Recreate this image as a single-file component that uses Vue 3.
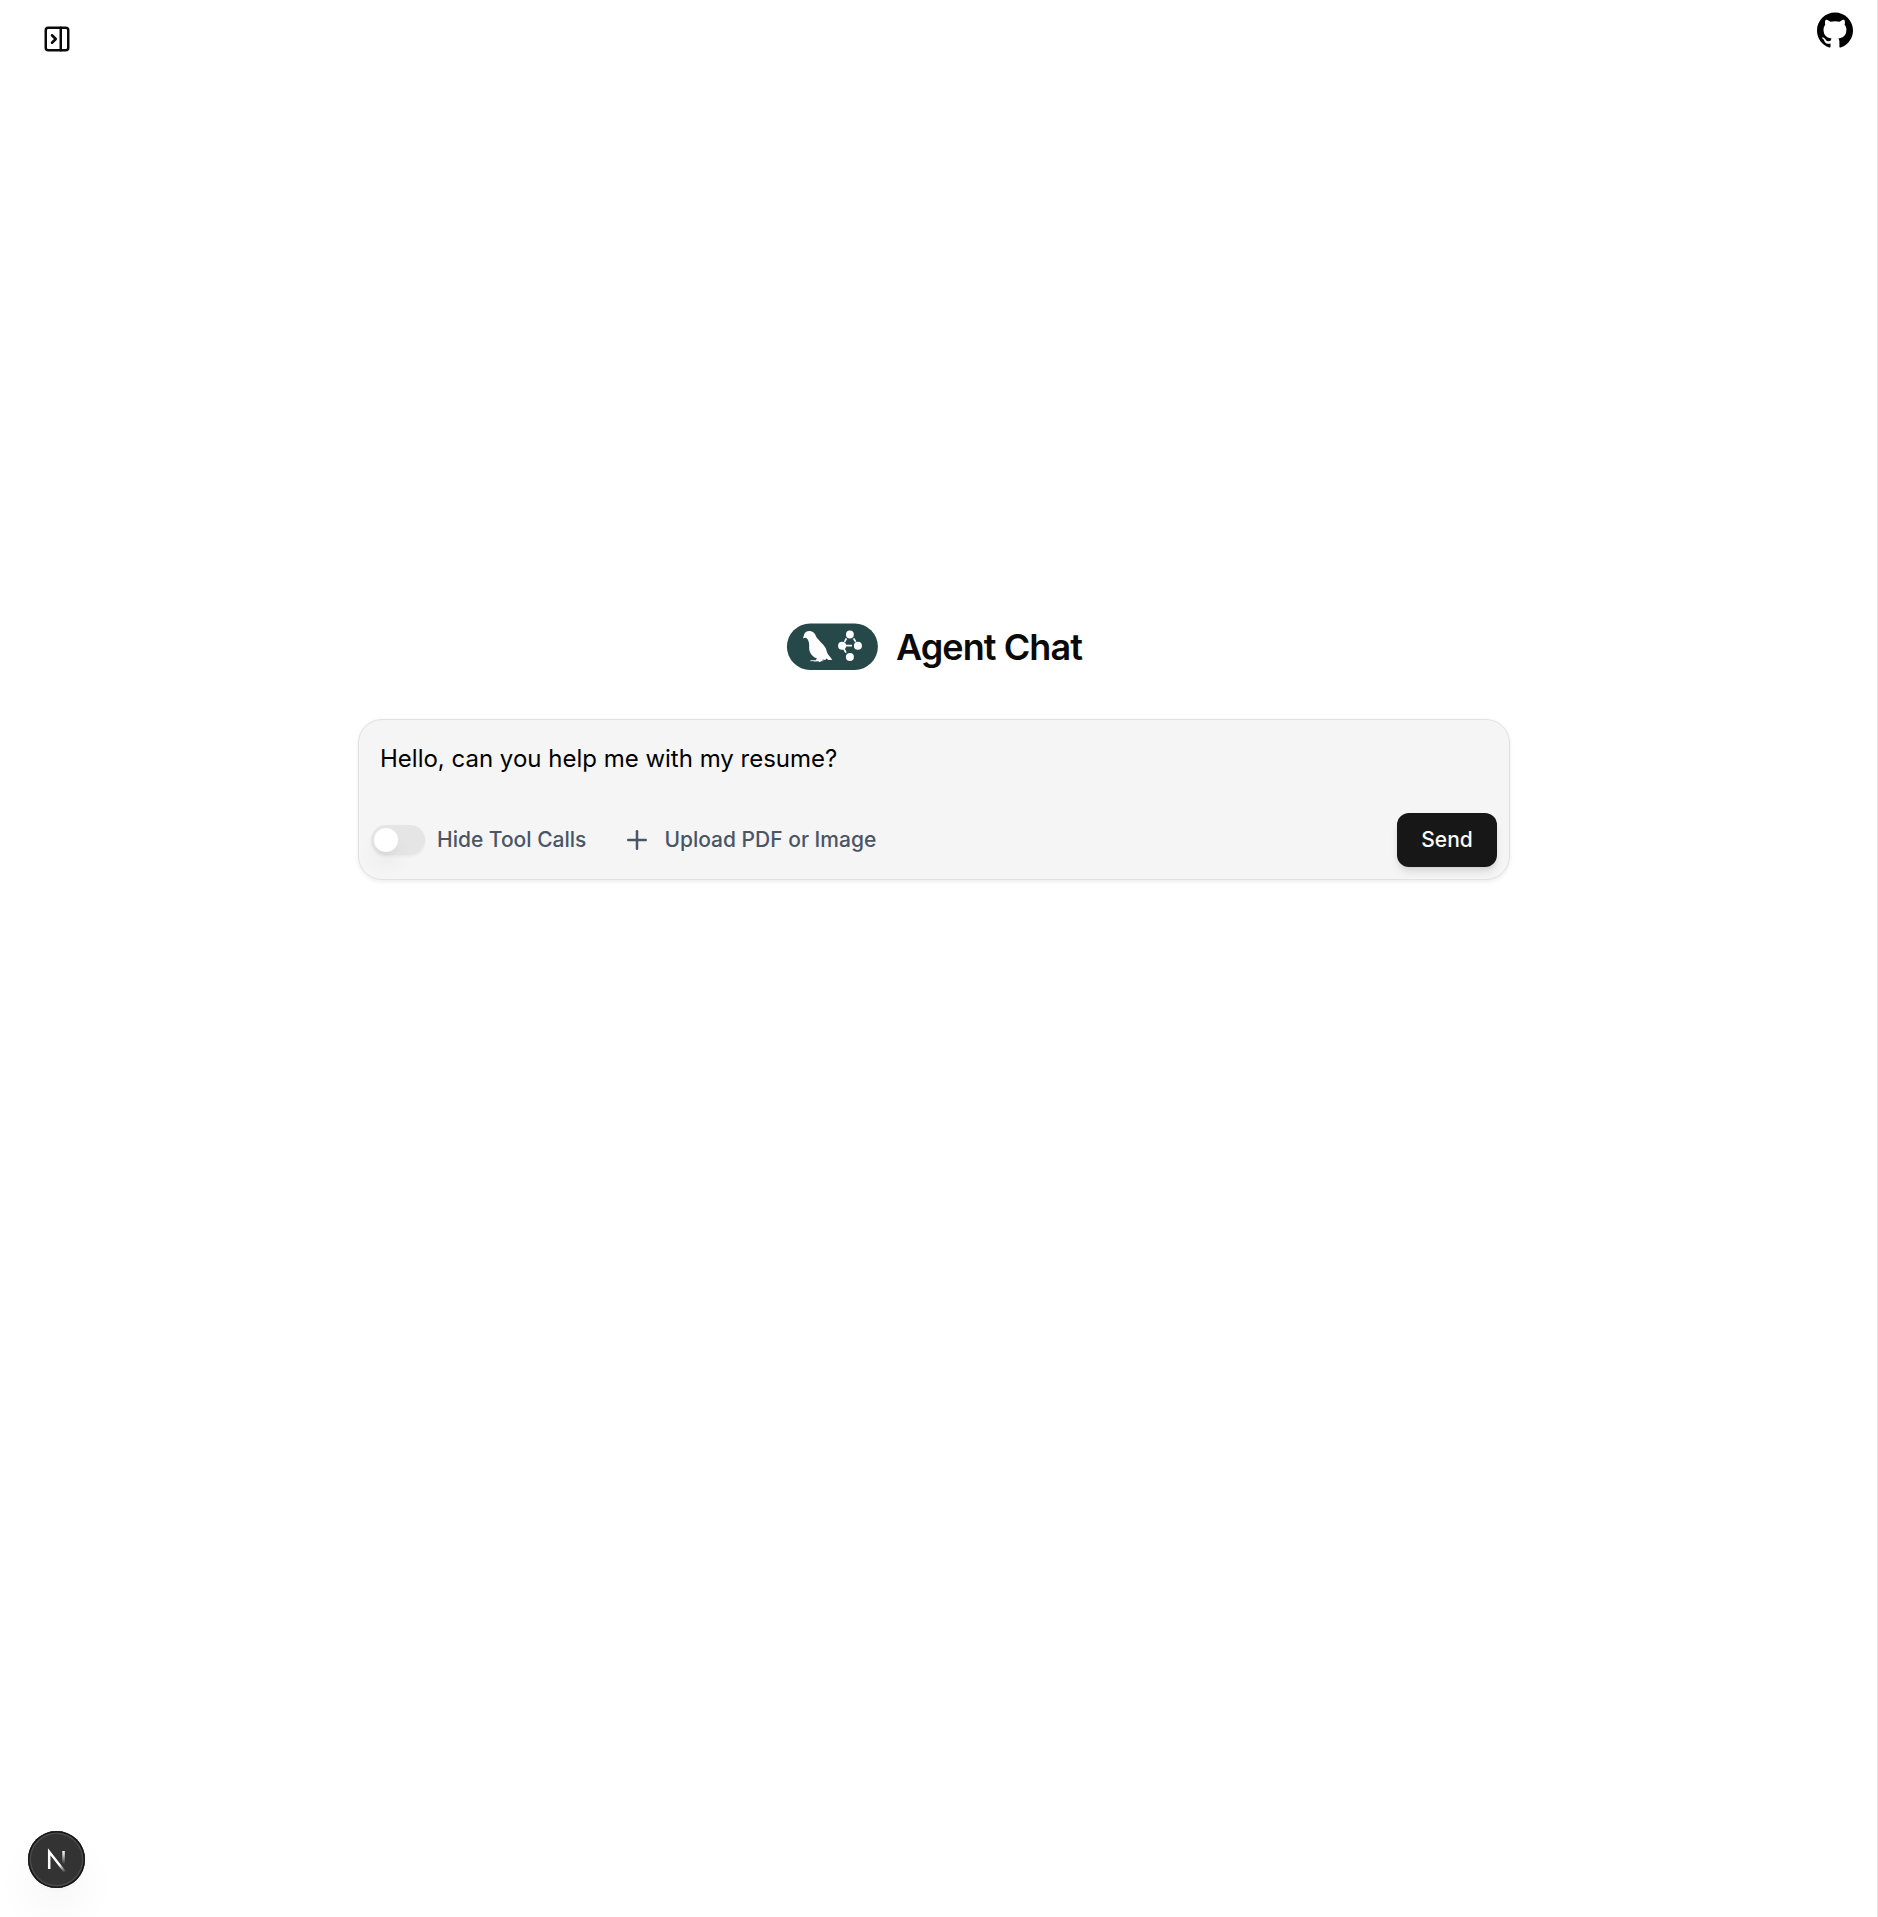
<script setup>
import { ref } from 'vue'

const message = ref('Hello, can you help me with my resume?')
</script>

<template>
  <div class="page">
    <header class="topbar">
      <button class="icon-btn panel" aria-label="Open history">
        <svg width="30" height="30" viewBox="0 0 24 24" fill="none" stroke="currentColor" stroke-width="2" stroke-linecap="round" stroke-linejoin="round">
          <rect width="18" height="18" x="3" y="3" rx="2" />
          <path d="M15 3v18" />
          <path d="m8 9 3 3-3 3" />
        </svg>
      </button>
      <a class="github" aria-label="GitHub">
        <svg width="36" height="36" viewBox="0 0 24 24" fill="#000">
          <path d="M12 .297c-6.63 0-12 5.373-12 12 0 5.303 3.438 9.8 8.205 11.385.6.113.82-.258.82-.577 0-.285-.01-1.04-.015-2.04-3.338.724-4.042-1.61-4.042-1.61C4.422 18.07 3.633 17.7 3.633 17.7c-1.087-.744.084-.729.084-.729 1.205.084 1.838 1.236 1.838 1.236 1.07 1.835 2.809 1.305 3.495.998.108-.776.417-1.305.76-1.605-2.665-.3-5.466-1.332-5.466-5.93 0-1.31.465-2.38 1.235-3.22-.135-.303-.54-1.523.105-3.176 0 0 1.005-.322 3.3 1.23.96-.267 1.98-.399 3-.405 1.02.006 2.04.138 3 .405 2.28-1.552 3.285-1.23 3.285-1.23.645 1.653.24 2.873.12 3.176.765.84 1.23 1.91 1.23 3.22 0 4.61-2.805 5.625-5.475 5.92.42.36.81 1.096.81 2.22 0 1.606-.015 2.896-.015 3.286 0 .315.21.69.825.57C20.565 22.092 24 17.592 24 12.297c0-6.627-5.373-12-12-12" />
        </svg>
      </a>
    </header>

    <main class="content">
      <div class="brand">
        <svg class="logo" width="92" height="48" viewBox="0 0 92 48">
          <rect x="0.9" y="0.4" width="91" height="46.5" rx="23.25" fill="#264849" />
          <g fill="#fff">
            <path d="M17.2 15.4C17 14.6 18 12.4 18.3 11C19.2 9.1 20.8 7.9 23.4 7.9C26 7.9 28 9.1 29.2 11.6C30.2 14.4 31.7 16.1 35 19.4C38.5 22.6 40.2 25 40.7 28.3C41.4 30.8 43.6 33.4 46.3 36.8L42.4 36.9L40.4 35.4L39.2 37.1L36.8 36.6L36.2 37.4L38.4 38.1L35 38.2L33.6 39.2L32.3 38.2L28.5 38.5L26.5 38L24.2 38.3L24.6 37.2L29.8 37.2L31 35.6C27 34 24.2 31.2 23.4 27.5C22.8 24.5 23.6 21.9 22.8 19.2C22.3 17.4 21.6 15.6 20.3 15C18.9 14.6 18.2 15.1 17.2 15.4Z" />
            <circle cx="63.9" cy="11.5" r="3.9" />
            <circle cx="56.1" cy="22.7" r="4" />
            <circle cx="71.9" cy="22.7" r="4" />
            <circle cx="63.9" cy="33.9" r="4" />
          </g>
          <path d="M60.4 15.4 58.6 18.8M67.6 15.4 69.6 18.8M58 22.7H66M57.8 25.8 60 29.6" fill="none" stroke="#fff" stroke-width="1.7" />
        </svg>
        <h1>Agent Chat</h1>
      </div>

      <form class="composer" @submit.prevent>
        <div class="message">{{ message }}</div>
        <div class="actions">
          <div class="toggle">
            <span class="switch"><span class="thumb"></span></span>
            <span class="label">Hide Tool Calls</span>
          </div>
          <div class="upload">
            <svg width="30" height="30" viewBox="0 0 24 24" fill="none" stroke="currentColor" stroke-width="2" stroke-linecap="round" stroke-linejoin="round">
              <path d="M5 12h14" />
              <path d="M12 5v14" />
            </svg>
            <span class="label">Upload PDF or Image</span>
          </div>
          <button class="send" type="submit">Send</button>
        </div>
      </form>
    </main>

    <div class="dev-badge">
      <svg width="57" height="57" viewBox="0 0 57 57" fill="none">
        <defs>
          <linearGradient id="stem" x1="0" y1="19.5" x2="0" y2="33" gradientUnits="userSpaceOnUse">
            <stop stop-color="#fff" />
            <stop offset="0.35" stop-color="#fff" stop-opacity="0.75" />
            <stop offset="1" stop-color="#fff" stop-opacity="0" />
          </linearGradient>
          <linearGradient id="diag" x1="29" y1="29" x2="37.5" y2="41" gradientUnits="userSpaceOnUse">
            <stop stop-color="#fff" />
            <stop offset="0.35" stop-color="#fff" />
            <stop offset="1" stop-color="#fff" stop-opacity="0" />
          </linearGradient>
        </defs>
        <path d="M21.2 38V20.8L37 41" stroke="url(#diag)" stroke-width="2.5" />
        <rect x="34.3" y="20" width="2.5" height="14" fill="url(#stem)" />
      </svg>
    </div>
  </div>
</template>

<style>
body {
  margin: 0;
  background: #fff;
}
</style>

<style scoped>
.page {
  box-sizing: border-box;
  width: 100%;
  height: 1917px;
  position: relative;
  display: flex;
  flex-direction: column;
  overflow: hidden;
  border-right: 1px solid #e5e5e5;
  font-family: Inter, "Liberation Sans", sans-serif;
  color: #0a0a0a;
}
.topbar {
  display: flex;
  justify-content: space-between;
  align-items: flex-start;
  height: 623px;
  flex: none;
  box-sizing: border-box;
  padding: 12px 24px 0 42px;
}
.icon-btn {
  border: 0;
  padding: 0;
  margin-top: 12px;
  background: none;
  color: #0a0a0a;
  display: flex;
}
.github {
  display: flex;
}
.content {
  display: flex;
  flex-direction: column;
  align-items: center;
  gap: 48px;
  margin-right: 9px;
}
.brand {
  display: flex;
  align-items: center;
  gap: 18px;
  height: 48px;
}
.logo {
  display: block;
}
h1 {
  margin: 0;
  font-size: 36px;
  line-height: 48px;
  font-weight: 600;
  letter-spacing: -0.9px;
}
.composer {
  box-sizing: border-box;
  width: 1152px;
  height: 161px;
  border: 1px solid #e2e2e2;
  border-radius: 24px;
  background: #f5f5f5;
  box-shadow: 0 1.5px 4.5px rgba(0, 0, 0, 0.07);
  display: flex;
  flex-direction: column;
  justify-content: space-between;
  padding: 21px 12px 12px;
}
.message {
  padding-left: 9px;
  font-size: 24px;
  line-height: 36px;
  color: #000;
}
.actions {
  display: flex;
  align-items: center;
  height: 54px;
}
.toggle,
.upload {
  display: flex;
  align-items: center;
  gap: 12px;
  color: #4a5565;
}
.upload {
  margin-left: 36px;
}
.label {
  font-size: 21px;
  line-height: 30px;
  font-weight: 500;
  white-space: nowrap;
}
.switch {
  box-sizing: border-box;
  width: 54px;
  height: 30px;
  padding: 3px;
  border-radius: 15px;
  background: #e5e5e5;
  box-shadow: 0 1.5px 3px rgba(0, 0, 0, 0.05);
}
.thumb {
  display: block;
  width: 24px;
  height: 24px;
  border-radius: 50%;
  background: #fff;
  box-shadow: 0 15px 22px -4px rgba(0, 0, 0, 0.1), 0 6px 9px -6px rgba(0, 0, 0, 0.1);
}
.send {
  margin-left: auto;
  width: 100px;
  height: 54px;
  padding: 0;
  border: 0;
  border-radius: 12px;
  background: #171717;
  color: #fafafa;
  font: 500 21px/30px Inter, "Liberation Sans", sans-serif;
  box-shadow: 0 6px 9px -1px rgba(0, 0, 0, 0.1), 0 3px 6px -3px rgba(0, 0, 0, 0.1);
}
.dev-badge {
  position: absolute;
  left: 28px;
  bottom: 29px;
  width: 57px;
  height: 57px;
  box-sizing: border-box;
  border-radius: 50%;
  background: #333;
  display: flex;
  align-items: center;
  justify-content: center;
  box-shadow: inset 0 0 0 1.5px #171717, inset 0 0 0 3px #4a4a4a, 0 24px 48px -8px rgba(0, 0, 0, 0.08), 0 3px 3px rgba(0, 0, 0, 0.02);
}
.dev-badge svg {
  flex: none;
}
</style>
